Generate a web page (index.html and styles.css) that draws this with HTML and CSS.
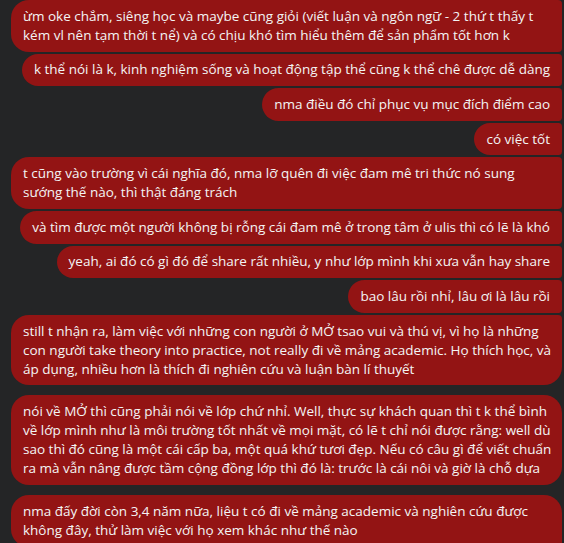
FILE: index.html
```html
<!DOCTYPE html>
<html lang="vi">
<head>
<meta charset="utf-8">
<link rel="stylesheet" href="styles.css">
</head>
<body>
<main class="chat">
  <section class="group">
    <div class="msg mid wide">ừm oke chắm, siêng học và maybe cũng giỏi (viết luận và ngôn ngữ - 2 thứ t thấy t<br>kém vl nên tạm thời t nể) và có chịu khó tìm hiểu thêm để sản phẩm tốt hơn k</div>
    <div class="msg mid">k thể nói là k, kinh nghiệm sống và hoạt động tập thể cũng k thể chê được dễ dàng</div>
    <div class="msg mid">nma điều đó chỉ phục vụ mục đích điểm cao</div>
    <div class="msg mid">có việc tốt</div>
    <div class="msg mid wide">t cũng vào trường vì cái nghĩa đó, nma lỡ quên đi việc đam mê tri thức nó sung<br>sướng thế nào, thì thật đáng trách</div>
    <div class="msg mid">và tìm được một người không bị rỗng cái đam mê ở trong tâm ở ulis thì có lẽ là khó</div>
    <div class="msg mid">yeah, ai đó có gì đó để share rất nhiều, y như lớp mình khi xưa vẫn hay share</div>
    <div class="msg mid">bao lâu rồi nhỉ, lâu ơi là lâu rồi</div>
    <div class="msg last wide">still t nhận ra, làm việc với những con người ở MỞ tsao vui và thú vị, vì họ là những<br>con người take theory into practice, not really đi về mảng academic. Họ thích học, và<br>áp dụng, nhiều hơn là thích đi nghiên cứu và luận bàn lí thuyết</div>
  </section>
  <section class="group">
    <div class="msg single wide">nói về MỞ thì cũng phải nói về lớp chứ nhỉ. Well, thực sự khách quan thì t k thể bình<br>về lớp mình như là môi trường tốt nhất về mọi mặt, có lẽ t chỉ nói được rằng: well dù<br>sao thì đó cũng là một cái cấp ba, một quá khứ tươi đẹp. Nếu có câu gì để viết chuẩn<br>ra mà vẫn nâng được tầm cộng đồng lớp thì đó là: trước là cái nôi và giờ là chỗ dựa</div>
  </section>
  <section class="group">
    <div class="msg first wide">nma đấy đời còn 3,4 năm nữa, liệu t có đi về mảng academic và nghiên cứu được<br>không đây, thử làm việc với họ xem khác như thế nào</div>
  </section>
</main>
</body>
</html>
```

FILE: styles.css
```css
html, body {
  margin: 0;
  padding: 0;
  background: #242526;
}

body {
  width: 564px;
  height: 543px;
  overflow: hidden;
  font-family: "Open Sans", "Noto Sans", sans-serif;
  font-size: 13.5px;
  line-height: 19px;
  color: #f4f4f4;
}

.chat {
  display: flex;
  flex-direction: column;
  gap: 10px;
  padding: 0 2px 0 11px;
}

.group {
  display: flex;
  flex-direction: column;
  align-items: flex-end;
  gap: 2px;
}

.msg {
  background: #931414;
  padding: 6.8px 12px;
  border-radius: 18px;
  white-space: nowrap;
}

.wide {
  align-self: stretch;
}

.mid {
  border-top-right-radius: 4px;
  border-bottom-right-radius: 4px;
}

.last {
  border-top-right-radius: 4px;
}

.first {
  border-bottom-right-radius: 4px;
}
```
